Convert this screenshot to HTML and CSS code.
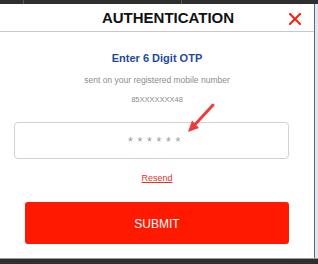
FILE: index.html
```html
<!DOCTYPE html>
<html lang="en">
<head>
    <meta charset="UTF-8">
    <meta name="viewport" content="width=device-width, initial-scale=1.0">
    <title>Authentication</title>
    <link rel="stylesheet" href="styles.css">
</head>
<body>
    <div class="topbar">
        <span class="tab tab-first"></span>
        <span class="tab tab-second"></span>
        <span class="tab tab-rest"></span>
    </div>
    <div class="frame">
        <div class="dialog">
            <div class="dialog-header">
                <h1>AUTHENTICATION</h1>
                <button class="close" type="button" aria-label="Close">
                    <svg width="12" height="12" viewBox="0 0 12 12">
                        <path d="M1 1 L11 11 M11 1 L1 11" stroke="#f5261c" stroke-width="2.2" stroke-linecap="square" fill="none"/>
                    </svg>
                </button>
            </div>
            <form class="otp-form" id="otpForm">
                <h2>Enter 6 Digit OTP</h2>
                <p class="hint">sent on your registered mobile number</p>
                <p class="hint number">85XXXXXXX48</p>
                <input class="otp-input" type="text" maxlength="6" placeholder="* * * * * *">
                <a class="resend" href="#">Resend</a>
                <button class="submit" type="submit">SUBMIT</button>
            </form>
            <svg class="pointer" width="40" height="45" viewBox="0 0 40 45">
                <line x1="33" y1="6" x2="15" y2="25.5" stroke="#ee3b3b" stroke-width="3" stroke-linecap="round"/>
                <polygon points="8,33 19,29 12,21.5" fill="#ee3b3b"/>
            </svg>
        </div>
        <div class="edge"></div>
    </div>
    <div class="bottombar"></div>
</body>
</html>
```

FILE: styles.css
```css
body {
    margin: 0;
    font-family: 'Liberation Sans', Arial, sans-serif;
    background-color: #2e2e2e;
    width: 318px;
    height: 264px;
    overflow: hidden;
}
.topbar {
    display: flex;
    height: 4px;
    background-color: #2e2e2e;
}
.tab {
    border-right: 1px solid #555;
}
.tab-first {
    width: 23px;
}
.tab-second {
    width: 157px;
}
.tab-rest {
    flex: 1;
    border-right: none;
}
.frame {
    display: flex;
    height: 254px;
}
.dialog {
    position: relative;
    width: 314px;
    background: #FFFFFF;
    display: flex;
    flex-direction: column;
}
.edge {
    flex: 1;
    border-left: 1px solid #4a6f95;
    background-color: #e6e6e6;
}
.bottombar {
    height: 6px;
    border-top: 1px solid #9a9a9a;
    background-color: #2e2e2e;
}
.dialog-header {
    display: grid;
    align-items: center;
    height: 27px;
    border-bottom: 1px solid #c8c8c8;
}
.dialog-header h1 {
    grid-area: 1 / 1;
    justify-self: center;
    margin: 0 0 0 22px;
    font-size: 15px;
    font-weight: bold;
    color: #111;
    line-height: 18px;
}
.close {
    grid-area: 1 / 1;
    justify-self: end;
    margin-right: 13px;
    margin-top: 2px;
    padding: 0;
    border: none;
    background: none;
    width: 12px;
    height: 12px;
    display: flex;
}
.otp-form {
    display: flex;
    flex-direction: column;
    align-items: center;
}
.otp-form h2 {
    margin: 19px 0 0;
    font-size: 11px;
    line-height: 14px;
    font-weight: bold;
    color: #1e4a9c;
}
.hint {
    margin: 9px 0 0;
    font-size: 8.5px;
    line-height: 12px;
    color: #8c8c8c;
}
.hint.number {
    margin-top: 8px;
    font-size: 7.5px;
}
.otp-input {
    align-self: flex-start;
    margin: 16px 0 0 14px;
    width: 275px;
    height: 37px;
    box-sizing: border-box;
    border: 1px solid #d2d2d2;
    border-radius: 4px;
    padding: 3px 0 0 6px;
    text-align: center;
    font-family: 'Liberation Sans', Arial, sans-serif;
    font-size: 12.5px;
    letter-spacing: 0.6px;
    outline: none;
}
.otp-input::placeholder {
    color: #9a9a9a;
}
.resend {
    margin-top: 13px;
    font-size: 9px;
    line-height: 12px;
    color: #e8301e;
    text-decoration: underline;
}
.submit {
    margin-top: 18px;
    width: 264px;
    height: 42px;
    border: none;
    border-radius: 3px;
    background-color: #ff1900;
    color: white;
    font-family: 'Liberation Sans', Arial, sans-serif;
    font-size: 12px;
    padding-top: 2px;
    cursor: pointer;
}
.pointer {
    position: absolute;
    left: 180px;
    top: 95px;
}
```
